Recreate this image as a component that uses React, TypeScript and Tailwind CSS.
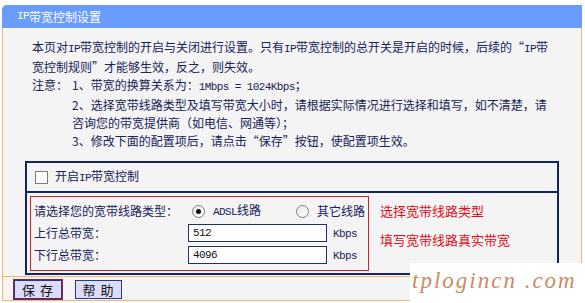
import React from "react";

const M = ({ children }: { children: React.ReactNode }) => (
  <span className="text-[11px] tracking-[-0.6px]" style={{ fontFamily: '"Liberation Mono", monospace' }}>
    {children}
  </span>
);

const QO = () => <span className="inline-block w-[12px] text-right">“</span>;
const QC = () => <span className="inline-block w-[12px] text-left">”</span>;

const Radio = ({ checked }: { checked?: boolean }) => (
  <span className="w-[13px] h-[13px] rounded-full border border-[#808080] bg-gradient-to-br from-[#e6e6e6] to-white flex items-center justify-center shrink-0">
    {checked && <span className="w-[5px] h-[5px] rounded-full bg-[#111]" />}
  </span>
);

export default function App() {
  return (
    <div
      className="w-[585px] h-[303px] bg-white relative overflow-hidden text-[12px] text-[#172258]"
      style={{ fontFamily: '"Noto Sans CJK SC", sans-serif' }}
    >
      <div className="ml-[2px] pt-[5px] w-[580px]">
        <div className="h-[23px] bg-[#6a9bff] rounded-tl-[5px] flex items-center pl-[15px] text-white">
          <M>IP</M>带宽控制设置
        </div>
        <div className="border-x border-[#f3b46c] bg-[#f4f4f4]">
          <div className="pt-[10px] pl-[29px] leading-[18px] whitespace-nowrap">
            <div>
              本页对<M>IP</M>带宽控制的开启与关闭进行设置。只有<M>IP</M>带宽控制的总开关是开启的时候，后续的<QO />
              <M>IP</M>带
            </div>
            <div>
              宽控制规则<QC />才能够生效，反之，则失效。
            </div>
            <div className="flex">
              <span className="w-[40px]">注意：</span>
              <span>
                1、带宽的换算关系为：<M>1Mbps = 1024Kbps</M>；
              </span>
            </div>
            <div className="pl-[40px]">2、选择宽带线路类型及填写带宽大小时，请根据实际情况进行选择和填写，如不清楚，请</div>
            <div className="pl-[40px]">咨询您的带宽提供商（如电信、网通等）；</div>
            <div className="pl-[40px]">
              3、修改下面的配置项后，请点击<QO />保存<QC />按钮，使配置项生效。
            </div>
          </div>

          <div className="mt-[11px] ml-[22px] w-[534px] border-2 border-[#14245e]">
            <div className="h-[28px] flex items-center pl-[8px]">
              <span className="w-[13px] h-[13px] border border-[#7c7c7c] bg-white shrink-0" />
              <span className="ml-[7px]">
                开启<M>IP</M>带宽控制
              </span>
            </div>
            <div className="border-t-2 border-[#14245e] flex pt-[3px] pb-[2px]">
              <div className="ml-[3px] w-[339px] h-[75px] border border-[#cc2233] pt-[3px] pl-[3px]">
                <div className="h-[22px] flex items-center">
                  <span className="w-[154px]">请选择您的宽带线路类型：</span>
                  <span className="ml-[4px]">
                    <Radio checked />
                  </span>
                  <span className="ml-[8px]">
                    <M>ADSL</M>线路
                  </span>
                  <span className="ml-[35px]">
                    <Radio />
                  </span>
                  <span className="ml-[8px]">其它线路</span>
                </div>
                <div className="h-[22px] flex items-center">
                  <span className="w-[154px]">上行总带宽：</span>
                  <div className="w-[139px] h-[18px] border border-[#1e3170] bg-white flex items-center pl-[4px] text-[#111]">
                    <M>512</M>
                  </div>
                  <span className="ml-[6px]">
                    <M>Kbps</M>
                  </span>
                </div>
                <div className="h-[22px] flex items-center">
                  <span className="w-[154px]">下行总带宽：</span>
                  <div className="w-[139px] h-[18px] border border-[#1e3170] bg-white flex items-center pl-[4px] text-[#111]">
                    <M>4096</M>
                  </div>
                  <span className="ml-[6px]">
                    <M>Kbps</M>
                  </span>
                </div>
              </div>
              <div className="ml-[11px] pt-[6px] flex flex-col gap-[11px] text-[13px] leading-[18px] text-[#e0101c]">
                <span>选择宽带线路类型</span>
                <span>填写宽带线路真实带宽</span>
              </div>
            </div>
          </div>

          <div className="mt-[1px] border-y border-[#f3b46c] h-[25px] flex items-start pt-[2px] pl-[10px]">
            <div className="border border-[#9c1c40]">
              <div className="w-[48px] h-[19px] border border-[#2a3a80] bg-[#dcdcfa] flex items-center justify-center text-[13px] text-[#111] tracking-[1px]">
                保 存
              </div>
            </div>
            <div className="ml-[12px] mt-[1px] w-[47px] h-[19px] border border-[#2a3a80] bg-[#dcdcfa] flex items-center justify-center text-[13px] text-[#111] tracking-[1px]">
              帮 助
            </div>
          </div>
        </div>
      </div>

      <div className="absolute left-[410px] top-[263px] w-[175px] h-[40px] bg-white">
        <div
          className="pl-[2px] pt-[3px] text-[23px] leading-[30px] italic tracking-[2px] text-[#c98a66] whitespace-nowrap"
          style={{ fontFamily: '"Liberation Serif", serif' }}
        >
          tplogincn .com
        </div>
      </div>
    </div>
  );
}
